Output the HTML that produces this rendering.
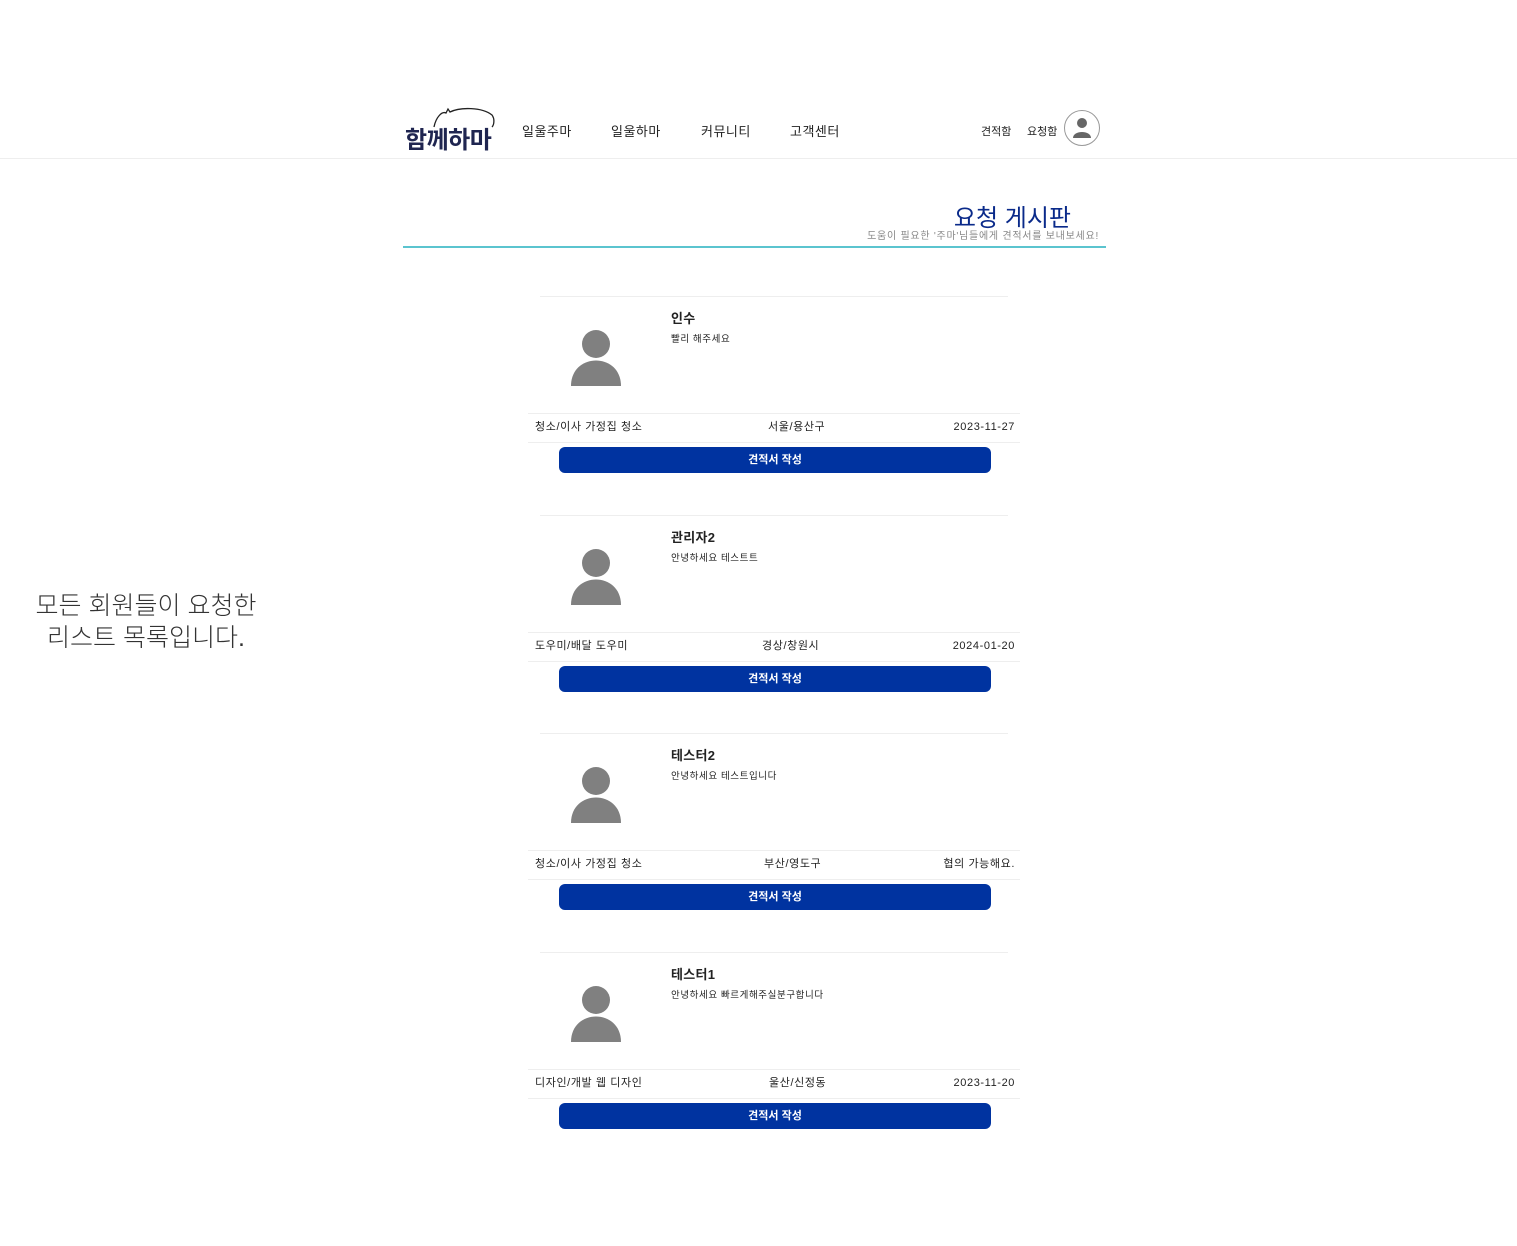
<!DOCTYPE html>
<html><head><meta charset="utf-8"><style>
body{margin:0;width:1517px;height:1246px;background:#fff;position:relative;font-family:"Liberation Sans","Noto Sans CJK KR",sans-serif;color:#222;overflow:hidden}
.a{position:absolute;white-space:nowrap}
.nav{font-size:13px;top:121px;color:#222;letter-spacing:0.5px}
.card{position:absolute;left:528px;width:492px;height:200px}
.card .tl{position:absolute;left:12px;right:12px;top:0;height:1px;background:#eee}
.card .n{position:absolute;left:143px;top:12px;font-size:13px;font-weight:bold;letter-spacing:0.3px}
.card .d{position:absolute;left:143px;top:35px;font-size:9.5px;letter-spacing:0.6px}
.card .av{position:absolute;left:43px;top:34px}
.card .l1{position:absolute;left:0;right:0;top:117px;height:1px;background:#eee}
.card .l2{position:absolute;left:0;right:0;top:146px;height:1px;background:#eee}
.card .row{position:absolute;top:123px;font-size:11px;line-height:16px;letter-spacing:0.6px}
.card .btn{position:absolute;left:31px;width:432px;top:151px;height:26px;background:#0033a0;border-radius:6px;color:#fff;font-size:11px;font-weight:bold;text-align:center;line-height:26px}
</style></head><body>
<div class="a" style="left:0;right:0;top:158px;height:1px;background:#eee;width:1517px"></div>
<svg class="a" style="left:432px;top:107px" width="64" height="22" viewBox="0 0 64 22"><path d="M2 20 C4 10 10 4 14 6 L16 2 L18 5 C28 0 50 0 60 8 C63 12 62 18 60 20" fill="none" stroke="#222" stroke-width="1.3"/></svg>
<div class="a" style="left:405px;top:120px;font-size:24px;font-weight:bold;color:#1f2550;letter-spacing:-0.5px">함께하마</div>
<div class="a nav" style="left:522px">일울주마</div>
<div class="a nav" style="left:611px">일울하마</div>
<div class="a nav" style="left:701px">커뮤니티</div>
<div class="a nav" style="left:790px">고객센터</div>
<div class="a" style="left:981px;top:123px;font-size:11px">견적함</div>
<div class="a" style="left:1027px;top:123px;font-size:11px">요청함</div>
<svg class="a" style="left:1063px;top:109px" width="38" height="38" viewBox="0 0 38 38"><circle cx="19" cy="19" r="17.5" fill="#fff" stroke="#999" stroke-width="1"/><circle cx="19" cy="14" r="5" fill="#666"/><path d="M10 29 C10 21 28 21 28 29 Z" fill="#666"/></svg>
<div class="a" style="right:446px;top:198px;font-size:24px;color:#0a2a8a">요청 게시판</div>
<div class="a" style="right:418px;top:227px;font-size:10px;color:#888;letter-spacing:0.75px">도움이 필요한 '주마'님들에게 견적서를 보내보세요!</div>
<div class="a" style="left:403px;width:703px;top:246px;height:1.5px;background:#5bc4cf"></div>
<div class="a" style="left:0;width:292px;text-align:center;top:590px;font-size:25px;line-height:32px;color:#333;font-weight:300">모든 회원들이 요청한<br>리스트 목록입니다.</div>

<div class="card" style="top:296px"><div class="tl"></div><div class="n">인수</div><div class="d">빨리 해주세요</div>
<svg class="av" width="50" height="56"><circle cx="25" cy="14" r="14" fill="#808080"/><path d="M0 56 C0 22 50 22 50 56 Z" fill="#808080"/></svg>
<div class="l1"></div><div class="row" style="left:7px">청소/이사 가정집 청소</div><div class="row" style="left:240px">서울/용산구</div><div class="row" style="right:5px">2023-11-27</div><div class="l2"></div><div class="btn">견적서 작성</div></div>

<div class="card" style="top:515px"><div class="tl"></div><div class="n">관리자2</div><div class="d">안녕하세요 테스트트</div>
<svg class="av" width="50" height="56"><circle cx="25" cy="14" r="14" fill="#808080"/><path d="M0 56 C0 22 50 22 50 56 Z" fill="#808080"/></svg>
<div class="l1"></div><div class="row" style="left:7px">도우미/배달 도우미</div><div class="row" style="left:234px">경상/창원시</div><div class="row" style="right:5px">2024-01-20</div><div class="l2"></div><div class="btn">견적서 작성</div></div>

<div class="card" style="top:733px"><div class="tl"></div><div class="n">테스터2</div><div class="d">안녕하세요 테스트입니다</div>
<svg class="av" width="50" height="56"><circle cx="25" cy="14" r="14" fill="#808080"/><path d="M0 56 C0 22 50 22 50 56 Z" fill="#808080"/></svg>
<div class="l1"></div><div class="row" style="left:7px">청소/이사 가정집 청소</div><div class="row" style="left:236px">부산/영도구</div><div class="row" style="right:5px">협의 가능해요.</div><div class="l2"></div><div class="btn">견적서 작성</div></div>

<div class="card" style="top:952px"><div class="tl"></div><div class="n">테스터1</div><div class="d">안녕하세요 빠르게해주실분구합니다</div>
<svg class="av" width="50" height="56"><circle cx="25" cy="14" r="14" fill="#808080"/><path d="M0 56 C0 22 50 22 50 56 Z" fill="#808080"/></svg>
<div class="l1"></div><div class="row" style="left:7px">디자인/개발 웹 디자인</div><div class="row" style="left:241px">울산/신정동</div><div class="row" style="right:5px">2023-11-20</div><div class="l2"></div><div class="btn">견적서 작성</div></div>
</body></html>
